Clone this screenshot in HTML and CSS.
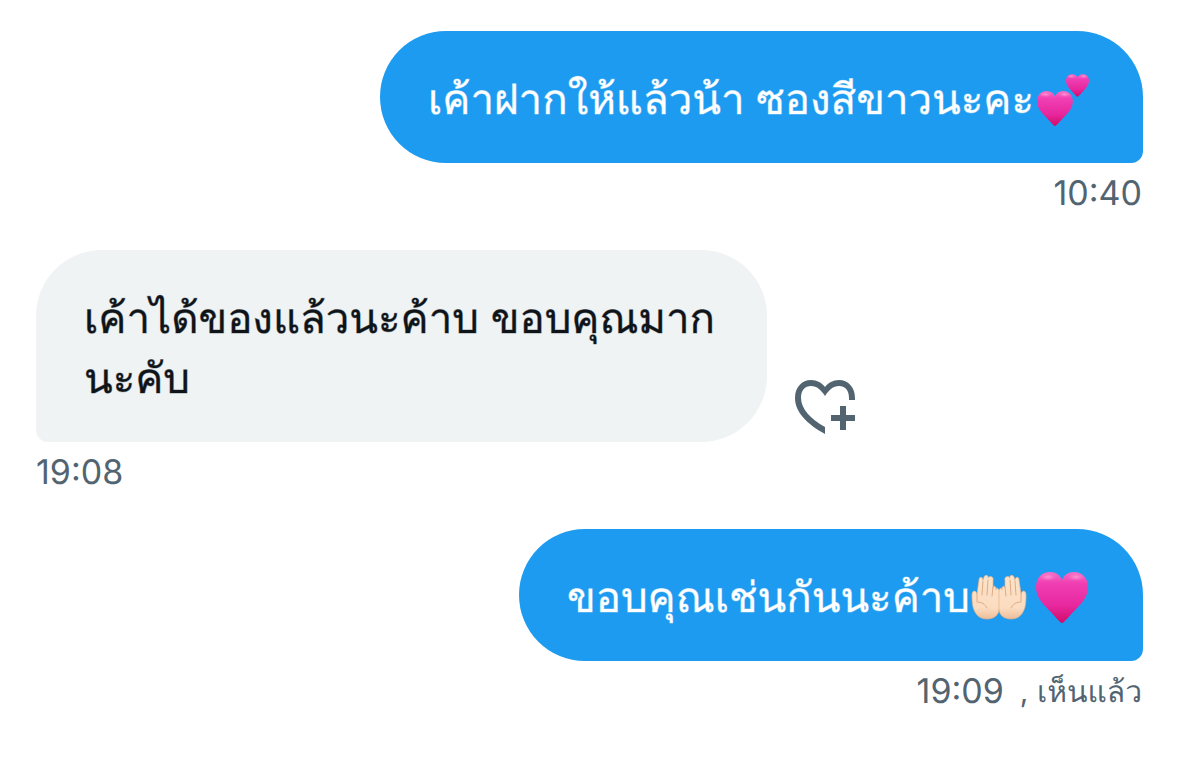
FILE: index.html
```html
<!DOCTYPE html>
<html lang="th">
<head>
<meta charset="utf-8">
<meta name="viewport" content="width=device-width, initial-scale=1">
<title>ข้อความ</title>
<link rel="stylesheet" href="styles.css">
</head>
<body>
<svg class="defs" aria-hidden="true">
  <defs>
    <linearGradient id="pink" x1="0" y1="0" x2="0" y2="1">
      <stop offset="0" stop-color="#f66fc4"/>
      <stop offset=".22" stop-color="#f03fb3"/>
      <stop offset=".65" stop-color="#e8289f"/>
      <stop offset="1" stop-color="#d10c69"/>
    </linearGradient>
    <radialGradient id="shine">
      <stop offset="0" stop-color="#ffb0e0" stop-opacity=".7"/>
      <stop offset="1" stop-color="#ff80cc" stop-opacity="0"/>
    </radialGradient>
    <linearGradient id="skin" x1="0" y1="0" x2="0" y2="1">
      <stop offset="0" stop-color="#fbe3ca"/>
      <stop offset=".75" stop-color="#fbdcc0"/>
      <stop offset="1" stop-color="#eebd98"/>
    </linearGradient>
    <symbol id="heart" viewBox="0 0 52 51">
      <path fill="url(#pink)" d="M26 51C24 51 18 43 11 36C4 29 0 23 0 15C0 6 6 0 14 0C20 0 24 3 26 8C28 3 32 0 38 0C46 0 52 6 52 15C52 23 48 29 41 36C34 43 28 51 26 51Z"/>
      <ellipse cx="12" cy="5" rx="9" ry="4" fill="url(#shine)"/>
      <ellipse cx="40" cy="5" rx="9" ry="4" fill="url(#shine)"/>
    </symbol>
    <symbol id="hand" viewBox="0 0 28 45">
      <path fill="url(#skin)" stroke="#e5b189" stroke-width=".7" d="M1 20C1 15 5 15 6 19L8 5C8 1 12 2 12 5L13 2C14-1 18 0 17 3C19 0 23 2 22 5L22 13C22 10 26 11 25 15C25 12 28 13 28 16L28 34C28 40 23 44 16 44C8 44 4 39 2 32C1 27 1 24 1 20Z"/>
      <path fill="none" stroke="#dda47a" stroke-width=".9" stroke-linecap="round" d="M12 6L11 20M17 5L16 20M22 12L21 21M6 19L6 26M6 27C11 27 14 29 16 33"/>
    </symbol>
  </defs>
</svg>
<main class="chat">
  <article class="message sent">
    <p class="bubble">เค้าฝากให้แล้วน้า ซองสีขาวนะคะ<svg class="emoji" viewBox="0 0 64 60" role="img" aria-label="หัวใจสองดวง"><use href="#heart" x="6" y="21" width="36" height="35"/><use href="#heart" x="35" y="4" width="23" height="23"/></svg></p>
    <footer class="meta"><time>10:40</time></footer>
  </article>

  <article class="message received">
    <div class="row">
      <p class="bubble">เค้าได้ของแล้วนะค้าบ ขอบคุณมากนะคับ</p>
      <button class="react" type="button" aria-label="เพิ่มความรู้สึก">
        <svg class="react-icon" viewBox="0 0 61 54" fill="none" aria-hidden="true">
          <path fill="#536471" d="M30 54C12 44 0 32 0 18C0 7 7 0 16 0C22 0 27 3 30 7C33 3 38 0 44 0C53 0 60 7 60 18V20H54V18C54 10 50 6 44 6C38 6 34 10 30 16C26 10 22 6 16 6C10 6 6 10 6 18C6 29 16 39 30 47Z"/>
          <path stroke="#536471" stroke-width="6" d="M48 26V50M36 38H60"/>
        </svg>
      </button>
    </div>
    <footer class="meta"><time>19:08</time></footer>
  </article>

  <article class="message sent">
    <p class="bubble">ขอบคุณเช่นกันนะค้าบ<svg class="emoji" viewBox="0 0 64 60" role="img" aria-label="แบมือสองข้าง"><use href="#hand" x="4" y="7" width="28" height="45"/><use href="#hand" x="-60" y="7" width="28" height="45" transform="scale(-1 1)"/></svg><svg class="emoji" viewBox="0 0 64 60" role="img" aria-label="หัวใจสีชมพู"><use href="#heart" x="5" y="4" width="52" height="51"/></svg></p>
    <footer class="meta"><time>19:09</time><span class="seen">, เห็นแล้ว</span></footer>
  </article>
</main>
</body>
</html>
```
FILE: styles.css
```css
* {
  box-sizing: border-box;
}

body {
  margin: 0;
  background: #fff;
  color: #0f1419;
  font-family: Inter, sans-serif;
  text-rendering: geometricPrecision;
}

.defs {
  position: absolute;
  width: 0;
  height: 0;
}

.chat {
  display: flex;
  flex-direction: column;
  gap: 36px;
  padding: 31px 36px;
}

.message {
  display: flex;
  flex-direction: column;
  gap: 11px;
}

.sent {
  align-items: flex-end;
}

.row {
  display: flex;
  align-items: flex-end;
  gap: 28px;
}

.bubble {
  margin: 0;
  padding: 39px 48px 33px;
  border-radius: 66px;
  font-size: 42px;
  line-height: 60px;
}

.sent .bubble {
  background: #1d9bf0;
  color: #fff;
  border-bottom-right-radius: 12px;
  -webkit-text-stroke: 1px rgb(255 255 255 / 40%);
}

.received .bubble {
  max-width: 66%;
  background: #eff3f4;
  border-bottom-left-radius: 12px;
  -webkit-text-stroke: 1px rgb(15 20 25 / 40%);
}

.emoji {
  width: 64px;
  height: 60px;
  vertical-align: top;
}

.emoji:first-child {
  margin-left: -3px;
}

.react {
  flex: none;
  margin-bottom: 8px;
  padding: 0;
  border: 0;
  background: none;
  cursor: pointer;
}

.react-icon {
  display: block;
  width: 61px;
  height: 54px;
}

.meta {
  display: flex;
  gap: 16px;
  padding-right: 1px;
  color: #536471;
  font-size: 34px;
  line-height: 40px;
}

.seen {
  font-size: 30px;
}
```
